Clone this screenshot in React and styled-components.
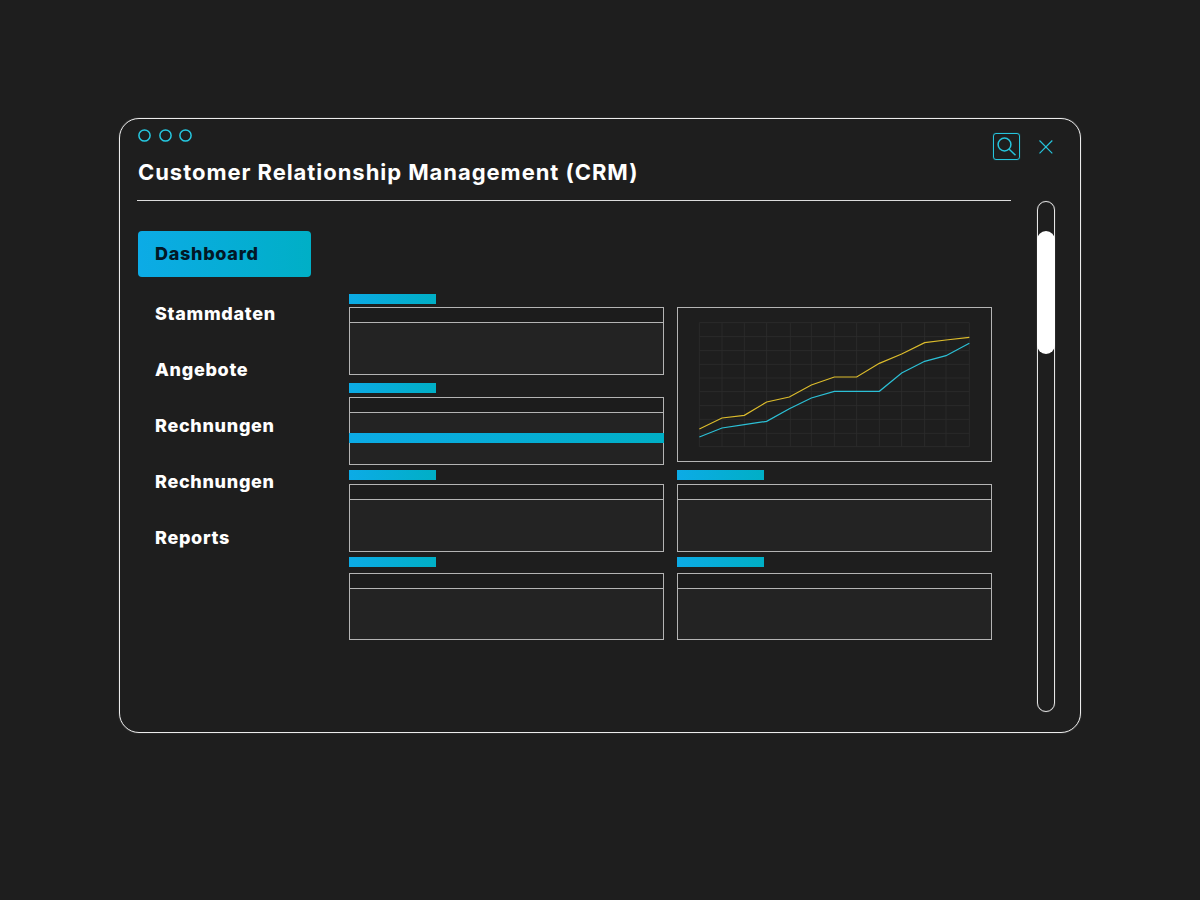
import React from "react";
import styled, { createGlobalStyle } from "styled-components";

const Global = createGlobalStyle`
  html, body { margin: 0; padding: 0; background: #1e1e1e; }
  * { box-sizing: border-box; }
`;
const gradient = "linear-gradient(90deg, #0cabe6 0%, #00afc6 100%)";
const Page = styled.div`
  width: 1200px; height: 900px; background: #1e1e1e; padding-top: 118px;
  display: flex; justify-content: center; align-items: flex-start;
  font-family: Inter, "Liberation Sans", sans-serif;
`;
const Window = styled.div`
  width: 962px; height: 615px; border: 1px solid #ececec; border-radius: 20px;
  box-shadow: 0 0 1px rgba(255, 255, 255, 0.55);
  padding: 10px 25px 20px 18px; display: flex; flex-direction: column;
`;
const TopBar = styled.header`
  height: 71px; display: flex; justify-content: space-between; align-items: flex-start;
`;
const TitleBlock = styled.div` display: flex; flex-direction: column; `;
const Dots = styled.div` display: flex; gap: 7.5px; `;
const DotSvg = styled.svg` display: block; width: 13px; height: 13px; `;
const Title = styled.h1`
  margin: 17px 0 0; font-size: 22px; line-height: 26px; font-weight: 700; color: #fff;
  letter-spacing: 0.95px; white-space: nowrap;
`;
const Tools = styled.div` display: flex; align-items: center; gap: 17px; margin-top: 4px; `;
const SearchBox = styled.div`
  width: 27px; height: 27px; border: 1px solid #26c4dc; border-radius: 3px;
  box-shadow: 0 0 1px rgba(38, 196, 220, 0.7);
  display: flex; align-items: center; justify-content: center;
`;
const Content = styled.div`
  flex: 1; display: grid; grid-template-columns: 874px 18px; column-gap: 26px; margin-left: -1px;
  min-height: 0;
`;
const Main = styled.div` display: flex; flex-direction: column; `;
const Rule = styled.hr` margin: 0; border: 0; height: 1px; background: #dcdcdc; `;
const Body = styled.div` display: flex; padding: 30px 0 0 1px; gap: 38px; `;
const Nav = styled.nav` width: 173px; display: flex; flex-direction: column; `;
const NavItem = styled.div`
  height: ${p => (p.$active ? "46px" : "56px")};
  margin-bottom: ${p => (p.$active ? "9px" : "0")};
  padding: 0 0 ${p => (p.$active ? "2px" : "1px")} 17px;
  display: flex; align-items: center; border-radius: 4px;
  font-size: 18px; font-weight: 800; letter-spacing: 0.7px;
  color: ${p => (p.$active ? "#021826" : "#fff")};
  background: ${p => (p.$active ? gradient : "transparent")};
`;
const Dash = styled.div` display: flex; gap: 13px; margin-top: 63px; `;
const Column = styled.div` width: 315px; display: flex; flex-direction: column; `;
const Section = styled.section` margin-top: ${p => p.$top || 0}px; `;
const Label = styled.div` width: 87px; height: 10px; background: ${gradient}; `;
const Panel = styled.div`
  margin-top: ${p => p.$gap}px; height: ${p => p.$h || 68}px; border: 1px solid #b4b4b4;
  background: #232323; display: flex; flex-direction: column;
`;
const PanelHead = styled.div` height: 15px; background: #1c1c1c; border-bottom: 1px solid #b4b4b4; flex: none; `;
const PanelBody = styled.div` flex: 1; padding-top: 20px; `;
const DataBar = styled.div` height: 10px; margin: 0 -1px; background: ${gradient}; `;
const ChartPanel = styled.div`
  margin-top: 13px; height: 155px; border: 1px solid #b4b4b4; background: #1e1e1e;
`;
const ChartSvg = styled.svg` display: block; width: 313px; height: 153px; `;
const Scrollbar = styled.div`
  margin-top: 1px; height: 511px; border: 1px solid #e6e6e6; border-radius: 9px; padding-top: 29px;
  box-shadow: 0 0 1px rgba(255, 255, 255, 0.55);
`;
const Thumb = styled.div`
  height: 123px; margin: 0 -1px; background: #fff; border-radius: 9px;
`;

const xs = [88, 156, 223, 290, 361, 424, 493, 560, 628, 695, 764, 828, 898];
const ys = [68, 110, 152, 193, 234, 275, 317, 358, 400, 440];
const lineX = [88, 156, 223, 290, 358, 424, 493, 560, 628, 695, 764, 828, 898];
const yellow = [387, 354, 346, 306, 291, 255, 231, 231, 190, 162, 128, 120, 112];
const blue = [411, 384, 374, 364, 326, 294, 274, 274, 274, 219, 184, 167, 130];
const pts = arr => arr.map((y, i) => `${lineX[i]},${y}`).join(" ");

const Dot = () => (
  <DotSvg viewBox="0 0 13 13" fill="none" stroke="#26c8e0" strokeWidth="1.5">
    <circle cx="6.5" cy="6.5" r="5.6" />
  </DotSvg>
);

const Card = ({ top, gap, h, bar }) => (
  <Section $top={top}>
    <Label />
    <Panel $gap={gap} $h={h}>
      <PanelHead />
      <PanelBody>{bar && <DataBar />}</PanelBody>
    </Panel>
  </Section>
);

export default function App() {
  return (
    <Page>
      <Global />
      <Window>
        <TopBar>
          <TitleBlock>
            <Dots><Dot /><Dot /><Dot /></Dots>
            <Title>Customer Relationship Management (CRM)</Title>
          </TitleBlock>
          <Tools>
            <SearchBox>
              <svg width="25" height="25" viewBox="0 0 25 25" fill="none" stroke="#26c4dc" strokeWidth="1.5">
                <circle cx="10.5" cy="10.5" r="6.4" />
                <path d="M15.2 15.2 L21.5 21.3" />
              </svg>
            </SearchBox>
            <svg width="18" height="18" viewBox="0 0 18 18" fill="none" stroke="#26c4dc" strokeWidth="1.2">
              <path d="M2.5 2.5 L15.3 15.3 M15.3 2.5 L2.5 15.3" />
            </svg>
          </Tools>
        </TopBar>
        <Content>
          <Main>
            <Rule />
            <Body>
              <Nav>
                <NavItem $active>Dashboard</NavItem>
                <NavItem>Stammdaten</NavItem>
                <NavItem>Angebote</NavItem>
                <NavItem>Rechnungen</NavItem>
                <NavItem>Rechnungen</NavItem>
                <NavItem>Reports</NavItem>
              </Nav>
              <Dash>
                <Column>
                  <Card gap={3} />
                  <Card top={8} gap={4} bar />
                  <Card top={5} gap={4} />
                  <Card top={5} gap={6} h={67} />
                </Column>
                <Column>
                  <ChartPanel>
                    <ChartSvg viewBox="24 24 939 459" fill="none">
                      {xs.map(x => <line key={x} x1={x} x2={x} y1={68} y2={440} stroke="#2d2d2d" strokeWidth="2.5" />)}
                      {ys.map(y => <line key={y} x1={88} x2={898} y1={y} y2={y} stroke="#2d2d2d" strokeWidth="2.5" />)}
                      <polyline points={pts(yellow)} stroke="#dcbc2c" strokeWidth="3.6" />
                      <polyline points={pts(blue)} stroke="#2cc0d6" strokeWidth="3.6" />
                    </ChartSvg>
                  </ChartPanel>
                  <Card top={8} gap={4} />
                  <Card top={5} gap={6} h={67} />
                </Column>
              </Dash>
            </Body>
          </Main>
          <Scrollbar><Thumb /></Scrollbar>
        </Content>
      </Window>
    </Page>
  );
}
